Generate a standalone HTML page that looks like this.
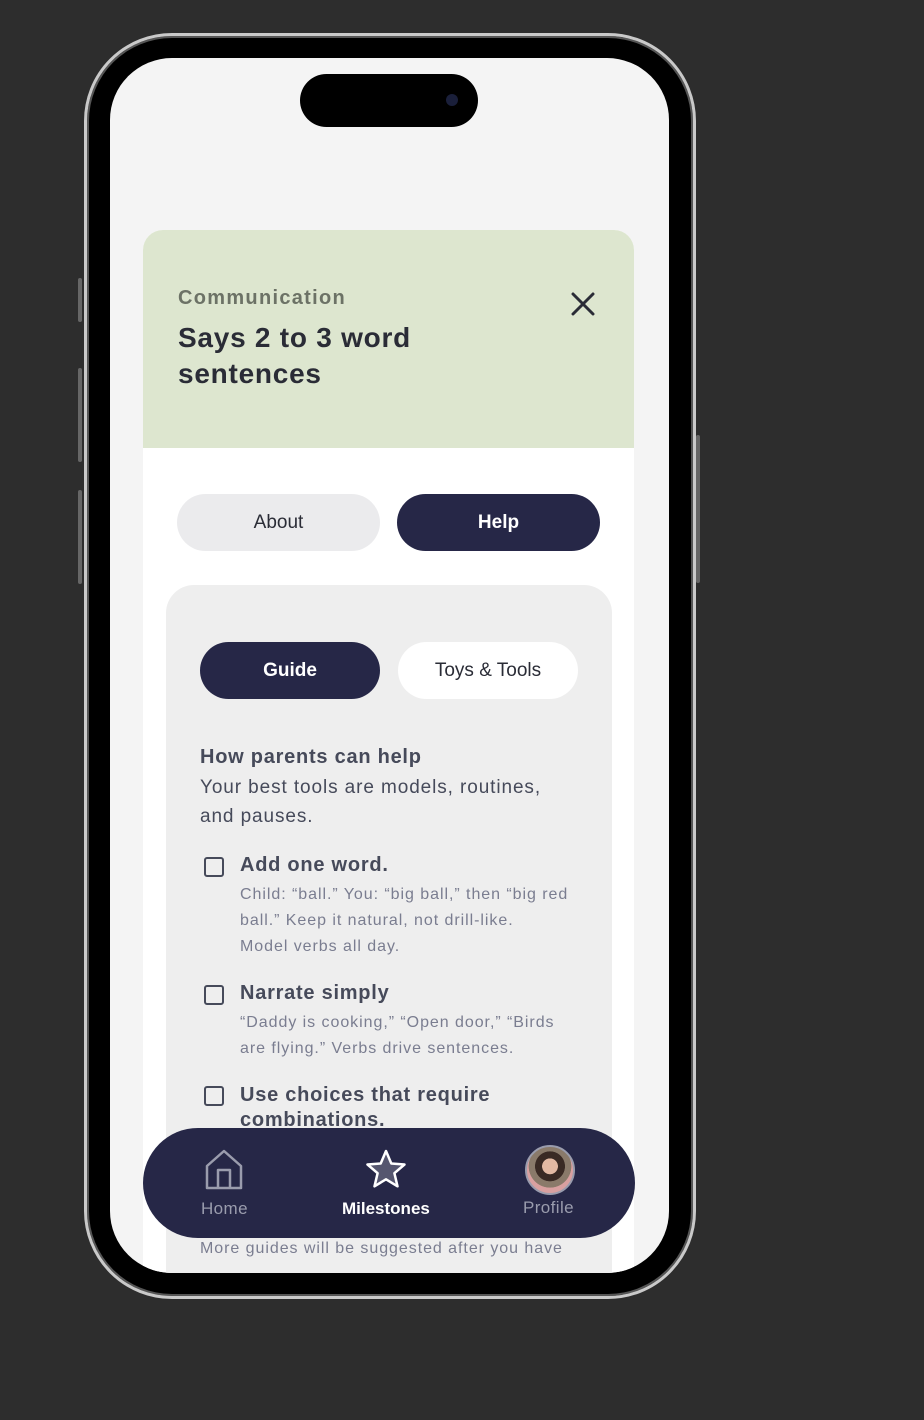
<!DOCTYPE html>
<html><head><style>
*{margin:0;padding:0;box-sizing:border-box}
body{width:924px;height:1420px;background:#2d2d2d;position:relative;overflow:hidden;font-family:"Liberation Sans",sans-serif}
.a{position:absolute}
.frame{left:84px;top:33px;width:612px;height:1266px;border-radius:88px;background:#000;border:3px solid #c9c9c9;box-shadow:inset 0 0 0 2px #555}
.screen{left:110px;top:58px;width:559px;height:1215px;border-radius:62px;background:#f4f4f4;overflow:hidden}
.t{position:absolute;white-space:nowrap}
.sub{color:#7a7d90;font-size:16px;line-height:26px;letter-spacing:0.95px}
.h{color:#464a5a;font-size:20px;font-weight:bold;letter-spacing:0.75px}
.cb{position:absolute;width:20px;height:20px;border:2.5px solid #464a5a;border-radius:3px}
</style></head><body>
<div class="a" style="left:78px;top:278px;width:4px;height:44px;background:#666;border-radius:2px"></div>
<div class="a" style="left:78px;top:368px;width:4px;height:94px;background:#666;border-radius:2px"></div>
<div class="a" style="left:78px;top:490px;width:4px;height:94px;background:#666;border-radius:2px"></div>
<div class="a" style="left:696px;top:435px;width:4px;height:148px;background:#666;border-radius:2px"></div>
<div class="a frame"></div>
<div class="a screen">
  <div class="a" style="left:190px;top:16px;width:178px;height:53px;border-radius:27px;background:#000"></div>
  <div class="a" style="left:336px;top:36px;width:12px;height:12px;border-radius:6px;background:#1a1f3a"></div>
  <div class="a" style="left:33px;top:172px;width:491px;height:1100px;background:#fff;border-radius:20px 20px 0 0;overflow:hidden">
    <div class="a" style="left:0;top:0;width:491px;height:218px;background:#dde6cf"></div>
    <div class="t" style="left:35px;top:57px;font-size:20px;font-weight:bold;color:#6c7266;letter-spacing:1.3px">Communication</div>
    <div class="t" style="left:35px;top:90px;font-size:28px;font-weight:bold;color:#2a2c36;line-height:36px;letter-spacing:0.75px">Says 2 to 3 word<br>sentences</div>
    <svg class="a" style="left:428px;top:62px" width="24" height="24" viewBox="0 0 24 24"><path d="M2 2L22 22M22 2L2 22" stroke="#2a2c36" stroke-width="3" stroke-linecap="round"/></svg>
    <div class="a" style="left:34px;top:264px;width:203px;height:57px;border-radius:29px;background:#ebebed;color:#2a2c36;font-size:19px;text-align:center;line-height:57px">About</div>
    <div class="a" style="left:254px;top:264px;width:203px;height:57px;border-radius:29px;background:#262747;color:#fff;font-size:19px;font-weight:bold;text-align:center;line-height:57px">Help</div>
    <div class="a" style="left:23px;top:355px;width:446px;height:800px;border-radius:28px;background:#eeeeee">
      <div class="a" style="left:34px;top:57px;width:180px;height:57px;border-radius:29px;background:#262747;color:#fff;font-size:19px;font-weight:bold;text-align:center;line-height:57px">Guide</div>
      <div class="a" style="left:232px;top:57px;width:180px;height:57px;border-radius:29px;background:#fff;color:#2a2c36;font-size:19px;text-align:center;line-height:57px">Toys &amp; Tools</div>
      <div class="t h" style="left:34px;top:161px">How parents can help</div>
      <div class="t" style="left:34px;top:188px;font-size:19px;color:#464a5a;line-height:29px;letter-spacing:0.9px">Your best tools are models, routines,<br>and pauses.</div>
      <div class="cb" style="left:38px;top:272px"></div>
      <div class="t h" style="left:74px;top:269px">Add one word.</div>
      <div class="t sub" style="left:74px;top:297px">Child: “ball.” You: “big ball,” then “big red<br>ball.” Keep it natural, not drill-like.<br>Model verbs all day.</div>
      <div class="cb" style="left:38px;top:400px"></div>
      <div class="t h" style="left:74px;top:397px">Narrate simply</div>
      <div class="t sub" style="left:74px;top:425px">“Daddy is cooking,” “Open door,” “Birds<br>are flying.” Verbs drive sentences.</div>
      <div class="cb" style="left:38px;top:501px"></div>
      <div class="t h" style="left:74px;top:498px;line-height:25px">Use choices that require<br>combinations.</div>
      <div class="t sub" style="left:34px;top:651px">More guides will be suggested after you have</div>
    </div>
  </div>
  <div class="a" style="left:33px;top:1070px;width:492px;height:110px;border-radius:55px;background:#262747">
    <svg class="a" style="left:61px;top:20px" width="40" height="44" viewBox="0 0 40 44"><path d="M3 18L20 3L37 18V40H3Z M14 40V22H26V40" fill="none" stroke="#9a9cad" stroke-width="2.5" stroke-linejoin="round"/></svg>
    <div class="t" style="left:58px;top:71px;font-size:17px;color:#9a9cad;letter-spacing:0.4px">Home</div>
    <svg class="a" style="left:221px;top:20px" width="44" height="42" viewBox="0 0 44 42"><path d="M22 3L27.3 15.5L40.5 16.5L30.4 25.2L33.5 38.3L22 31.3L10.5 38.3L13.6 25.2L3.5 16.5L16.7 15.5Z" fill="#55566f" stroke="#fff" stroke-width="2.5" stroke-linejoin="round"/></svg>
    <div class="t" style="left:199px;top:71px;font-size:17px;font-weight:bold;color:#fff">Milestones</div>
    <div class="a" style="left:382px;top:17px;width:50px;height:50px;border-radius:25px;border:2.5px solid #9a9cad;background:radial-gradient(circle at 50% 42%,#e3b9a3 0 22%,#3a2a24 23% 42%,#8a7a6a 43% 60%,#d9a0a0 61% 100%)"></div>
    <div class="t" style="left:380px;top:70px;font-size:17px;color:#9a9cad;letter-spacing:0.4px">Profile</div>
  </div>
</div>
</body></html>
